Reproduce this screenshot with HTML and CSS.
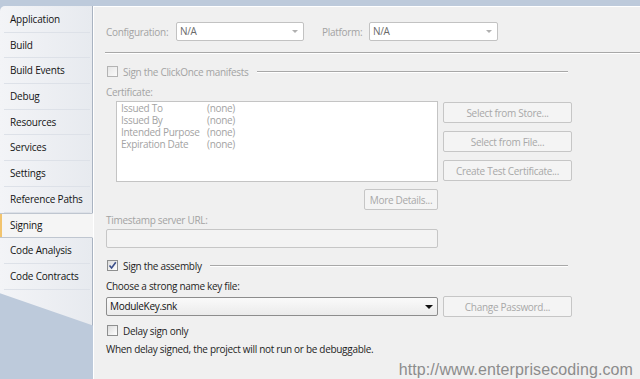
FILE: index.html
```html
<!DOCTYPE html>
<html lang="en">
<head>
  <meta charset="UTF-8" />
  <title>Project Properties - Signing</title>
  <link rel="stylesheet" href="styles.css">
</head>
<body>

  <div class="frame">
    <nav class="tabs">
      <div class="tab">Application</div>
      <div class="tab">Build</div>
      <div class="tab">Build Events</div>
      <div class="tab">Debug</div>
      <div class="tab">Resources</div>
      <div class="tab">Services</div>
      <div class="tab">Settings</div>
      <div class="tab">Reference Paths</div>
      <div class="tab active">Signing</div>
      <div class="tab">Code Analysis</div>
      <div class="tab">Code Contracts</div>
      <div class="tab-tail"></div>
    </nav>

    <main class="page">
      <div class="config-row">
        <span class="field-label config-label">Configuration:</span>
        <div class="select config-select">N/A<span class="arrow"></span></div>
        <span class="field-label platform-label">Platform:</span>
        <div class="select platform-select">N/A<span class="arrow"></span></div>
      </div>

      <div class="rule"></div>

      <div class="group-head manifests disabled">
        <span class="check"></span>
        <span>Sign the ClickOnce manifests</span>
        <span class="line"></span>
      </div>

      <div class="label cert-label disabled">Certificate:</div>

      <div class="cert">
        <div class="cert-box">
          <div class="cert-row"><span>Issued To</span><span>(none)</span></div>
          <div class="cert-row"><span>Issued By</span><span>(none)</span></div>
          <div class="cert-row"><span>Intended Purpose</span><span>(none)</span></div>
          <div class="cert-row"><span>Expiration Date</span><span>(none)</span></div>
        </div>
        <div class="cert-buttons">
          <button disabled>Select from Store...</button>
          <button disabled>Select from File...</button>
          <button disabled>Create Test Certificate...</button>
        </div>
      </div>

      <div class="details-row">
        <button class="details" disabled>More Details...</button>
      </div>

      <div class="label stamp-label disabled">Timestamp server URL:</div>
      <div class="textbox"></div>

      <div class="group-head assembly">
        <span class="check checked">
          <svg width="9" height="9" viewBox="0 0 9 9"><path d="M1.5 4.5 L3.6 7 L7.8 1.2" fill="none" stroke="#3b4f8a" stroke-width="1.6"/></svg>
        </span>
        <span>Sign the assembly</span>
        <span class="line"></span>
      </div>

      <div class="label key-label">Choose a strong name key file:</div>

      <div class="key-row">
        <div class="select key-select">ModuleKey.snk<span class="arrow dark"></span></div>
        <button disabled>Change Password...</button>
      </div>

      <div class="group-head delay">
        <span class="check"></span>
        <span>Delay sign only</span>
      </div>

      <p class="note">When delay signed, the project will not run or be debuggable.</p>

      <div class="watermark">http://www.enterprisecoding.com</div>
    </main>
  </div>

</body>
</html>
```

FILE: styles.css
```css
* {
  box-sizing: border-box;
}

body {
  margin: 0;
  width: 640px;
  height: 379px;
  overflow: hidden;
  background: #bdcadb;
  font-family: 'Open Sans', 'Noto Sans', sans-serif;
  font-size: 10px;
  letter-spacing: -0.3px;
  color: #1e1e1e;
}

.frame {
  display: flex;
  height: 100%;
  padding-top: 6px;
}

/* Left tab strip */
.tabs {
  width: 93px;
  flex-shrink: 0;
  display: flex;
  flex-direction: column;
}

.tab {
  height: 25.7px;
  line-height: 25.7px;
  padding-left: 10px;
  background: linear-gradient(90deg, #f3f4f7, #e7eaef);
  border-right: 1px solid #a9b3c1;
  position: relative;
  color: #141414;
  letter-spacing: -0.2px;
}

.tab:first-child {
  border-top-left-radius: 5px;
  height: 26.7px;
  padding-top: 1px;
  line-height: 25.7px;
}

.tab::after {
  content: "";
  position: absolute;
  left: 4px;
  right: 2px;
  bottom: 0;
  border-bottom: 1px solid #dde1e8;
}

.tab.active {
  background: #f5f5f5;
  border-right-color: transparent;
  border-top: 1px solid #bfc6d0;
  border-bottom: 1px solid #bfc6d0;
  line-height: 23.7px;
}

.tab.active::before {
  content: "";
  position: absolute;
  left: 0;
  top: 0;
  bottom: 0;
  width: 2px;
  background: #f2c46e;
}

.tab.active::after {
  display: none;
}

.tab-tail {
  height: 36px;
  background: linear-gradient(90deg, #f3f4f7, #e7eaef);
  border-right: 1px solid #a9b3c1;
  clip-path: polygon(0 0, 100% 0, 100% 100%, 0 10%);
}

/* Right property page */
.page {
  flex: 1;
  background: #f0f0f0;
  border-left: 1px solid #fff;
  border-top: 1px solid #fff;
  padding: 15px 0 0 12px;
}

.disabled {
  color: #a3a3a3;
}

.config-row {
  display: flex;
  align-items: center;
  height: 19px;
  color: #a3a3a3;
}

.config-label {
  width: 70px;
}

.platform-label {
  width: 47px;
  margin-left: 18px;
}

.select {
  position: relative;
  height: 19px;
  line-height: 17px;
  padding-left: 3px;
  background: #fff;
  border: 1px solid #c2c2c2;
  border-radius: 2px;
  color: #6a6a6a;
}

.config-select {
  width: 128px;
}

.platform-select {
  width: 129px;
}

.arrow {
  position: absolute;
  right: 5px;
  top: 7px;
  border-left: 3px solid transparent;
  border-right: 3px solid transparent;
  border-top: 3px solid #b0b0b0;
}

.arrow.dark {
  border-top-color: #111;
  border-left-width: 4px;
  border-right-width: 4px;
  border-top-width: 4px;
  right: 4px;
}

.rule {
  margin: 11px 0 0 -1px;
  border-top: 1px solid #a8a8a8;
  border-bottom: 1px solid #fff;
}

.group-head {
  display: flex;
  align-items: center;
  height: 13px;
  width: 462px;
}

.group-head .line {
  flex: 1;
  margin-left: 8px;
  border-top: 1px solid #a8a8a8;
  border-bottom: 1px solid #fff;
}

.manifests {
  margin-top: 11px;
}

.check {
  width: 11px;
  height: 11px;
  margin: 0 5px 0 1px;
  border: 1px solid #b3b3b3;
  background: linear-gradient(135deg, #e6e6e6, #fafafa);
  display: flex;
  align-items: center;
  justify-content: center;
}

.check.checked,
.delay .check {
  border-color: #8e8f8f;
  background: linear-gradient(135deg, #dcdcdc, #fff);
}

.label {
  height: 12px;
  line-height: 12px;
}

.cert-label {
  margin-top: 8px;
}

.cert {
  display: flex;
  margin-top: 3px;
}

.cert-box {
  width: 322px;
  height: 81px;
  margin-left: 10px;
  background: #fff;
  border: 1px solid #c4c4c4;
  padding-left: 4px;
  color: #a3a3a3;
}

.cert-row {
  display: flex;
  height: 12px;
  line-height: 12px;
}

.cert-row span:first-child {
  width: 86px;
  white-space: nowrap;
}

.cert-buttons {
  display: flex;
  flex-direction: column;
  gap: 8px;
  margin: 1px 0 0 5px;
}

button {
  font-family: inherit;
  font-size: 10px;
  letter-spacing: inherit;
  height: 21px;
  width: 129px;
  padding: 0;
  background: #f4f4f4;
  border: 1px solid #c6c6c6;
  border-radius: 2px;
  color: #a8a8a8;
}

.details-row {
  display: flex;
  justify-content: flex-end;
  width: 332px;
  margin-top: 7px;
}

.details {
  width: 74px;
}

.stamp-label {
  margin-top: 4px;
}

.textbox {
  width: 332px;
  height: 19px;
  margin-top: 3px;
  border: 1px solid #c6c6c6;
  border-radius: 2px;
  background: #f3f3f3;
}

.assembly {
  margin-top: 11px;
}

.key-label {
  margin-top: 8px;
}

.key-row {
  display: flex;
  align-items: center;
  gap: 5px;
  margin-top: 4px;
}

.key-select {
  width: 332px;
  border-color: #8d8d8d;
  background: linear-gradient(#fafafa, #ebebeb);
  color: #111;
}

.delay {
  margin-top: 7px;
}

.note {
  margin: 6px 0 0;
  height: 12px;
  line-height: 12px;
}

.watermark {
  margin: 6px 7px 0 0;
  text-align: right;
  font-family: 'Liberation Sans', Arial, sans-serif;
  font-size: 16px;
  letter-spacing: 0.1px;
  line-height: 17px;
  color: #8c8c8c;
}
```
